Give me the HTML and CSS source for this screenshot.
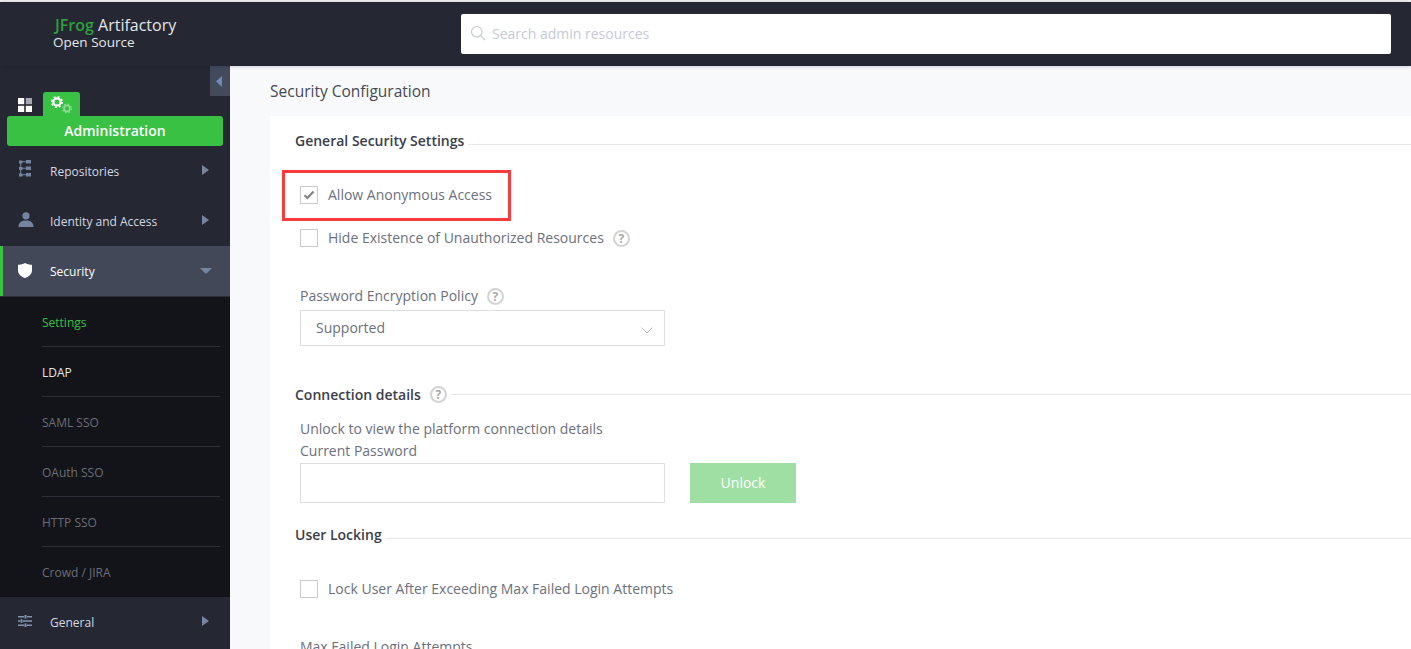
FILE: index.html
```html
<!DOCTYPE html>
<html lang="en">
<head>
    <meta charset="UTF-8">
    <title>Security Configuration</title>
    <link rel="stylesheet" href="styles.css">
</head>
<body>
    <header class="topbar">
        <div class="brand">
            <div class="brand-name"><b>JFrog</b> Artifactory</div>
            <div class="brand-sub">Open Source</div>
        </div>
        <div class="search">
            <svg width="16" height="16" viewBox="0 0 16 16" fill="none" stroke="#c5cad6" stroke-width="1.2"><circle cx="6.8" cy="6.8" r="5.3"/><path d="M10.7 10.7 L15 15"/></svg>
            <span>Search admin resources</span>
        </div>
    </header>
    <div class="layout">
        <aside class="sidebar">
            <div class="collapse"><svg width="6" height="11" viewBox="0 0 6 11"><path d="M6 0 V11 L0 5.500 Z" fill="#6f8ab5"/></svg></div>
            <div class="tabs">
                <div class="tab-grid">
                    <svg width="14" height="14" viewBox="0 0 14 14"><rect width="6.2" height="6.2" fill="#fff"/><rect x="7.8" width="6.2" height="6.2" fill="#a5a8af"/><rect y="7.8" width="6.2" height="6.2" fill="#fff"/><rect x="7.8" y="7.8" width="6.2" height="6.2" fill="#fff"/></svg>
                </div>
                <div class="tab-active">
                    <svg width="22" height="20" viewBox="0 0 22 20">
                        <circle cx="6" cy="7" r="3.600" fill="none" stroke="#fff" stroke-width="2.2"/>
                        <circle cx="6" cy="7" r="5.200" fill="none" stroke="#fff" stroke-width="1.600" stroke-dasharray="2.040 2.040"/>
                        <circle cx="16" cy="13.500" r="2.900" fill="none" stroke="#92dc97" stroke-width="1.500"/>
                        <circle cx="16" cy="13.500" r="4.300" fill="none" stroke="#92dc97" stroke-width="1.300" stroke-dasharray="1.690 1.690"/>
                    </svg>
                </div>
            </div>
            <div class="module-title">Administration</div>
            <nav>
                <div class="nav-item">
                    <svg class="nav-icon icon-repo" width="12" height="17" viewBox="0 0 12 17" fill="#75859f"><rect x="0" y="0.500" width="3.500" height="3"/><rect x="7" y="0" width="5" height="3.500"/><rect x="7" y="6.500" width="5" height="3.500"/><rect x="7" y="13" width="5" height="3.500"/><rect x="0" y="7" width="3.500" height="3"/><rect x="0" y="13.500" width="3.500" height="3"/><path d="M1.200 3h1v11h-1zM3 1.300h4v1H3zM3 7.800h4v1H3zM3 14.300h4v1H3z"/></svg>
                    <span class="nav-label">Repositories</span>
                    <span class="arrow-right"></span>
                </div>
                <div class="nav-item">
                    <svg class="nav-icon icon-user" width="16" height="15" viewBox="0 0 16 15" fill="#75859f"><circle cx="8" cy="3.800" r="3.600"/><path d="M0.500 15 C0.500 10.500 3.500 8.600 8 8.600 C12.500 8.600 15.500 10.500 15.500 15 Z"/></svg>
                    <span class="nav-label">Identity and Access</span>
                    <span class="arrow-right"></span>
                </div>
                <div class="nav-item nav-item-open">
                    <svg class="nav-icon" width="14" height="15" viewBox="0 0 14 15" fill="#fff"><path d="M7 0 C9 1.200 11.500 1.800 14 1.800 V7.500 C14 11 11 13.600 7 15 C3 13.600 0 11 0 7.500 V1.800 C2.500 1.800 5 1.200 7 0 Z"/></svg>
                    <span class="nav-label">Security</span>
                    <span class="arrow-down"></span>
                </div>
                <div class="subnav">
                    <div class="sub-item sub-current">Settings</div>
                    <div class="sub-item sub-light">LDAP</div>
                    <div class="sub-item">SAML SSO</div>
                    <div class="sub-item">OAuth SSO</div>
                    <div class="sub-item">HTTP SSO</div>
                    <div class="sub-item sub-last">Crowd / JIRA</div>
                </div>
                <div class="nav-item">
                    <svg class="nav-icon" width="14" height="12" viewBox="0 0 14 12" fill="#8494ae"><path d="M0 1h6v1.500H0zM9 1h5v1.500H9zM6.500 0h2v3.500h-2zM0 5.300h2v1.500H0zM5 5.300h9v1.500H5zM2.500 4.300h2v3.500h-2zM0 9.500h6V11H0zM9 9.500h5V11H9zM6.500 8.500h2V12h-2z"/></svg>
                    <span class="nav-label">General</span>
                    <span class="arrow-right"></span>
                </div>
            </nav>
        </aside>
        <main class="content">
            <h1>Security Configuration</h1>
            <section class="card">
                <div class="section-head"><h2>General Security Settings</h2><span class="rule"></span></div>
                <div class="field-row row-anon">
                    <span class="checkbox"><svg width="12" height="10" viewBox="0 0 12 10" fill="none" stroke="#858585" stroke-width="2.2"><path d="M1.500 5.200 L4.500 8 L10.500 1.500"/></svg></span>
                    <span class="row-text">Allow Anonymous Access</span>
                </div>
                <div class="highlight"></div>
                <div class="field-row row-hide">
                    <span class="checkbox"></span>
                    <span class="row-text">Hide Existence of Unauthorized Resources</span>
                    <span class="help">?</span>
                </div>
                <div class="label-row policy-label"><span>Password Encryption Policy</span><span class="help">?</span></div>
                <div class="select">
                    <span class="row-text">Supported</span>
                    <svg width="12" height="7" viewBox="0 0 12 7" fill="none" stroke="#b9bdc8"><path d="M0.500 0.500 L6 6 L11.500 0.500"/></svg>
                </div>
                <div class="section-head head-connection"><h2>Connection details</h2><span class="help">?</span><span class="rule"></span></div>
                <p class="hint">Unlock to view the platform connection details</p>
                <div class="label-row password-label">Current Password</div>
                <div class="unlock-row">
                    <div class="text-input"></div>
                    <div class="unlock-btn">Unlock</div>
                </div>
                <div class="section-head head-locking"><h2>User Locking</h2><span class="rule"></span></div>
                <div class="field-row row-lock">
                    <span class="checkbox"></span>
                    <span class="row-text">Lock User After Exceeding Max Failed Login Attempts</span>
                </div>
                <div class="label-row attempts-label">Max Failed Login Attempts</div>
            </section>
        </main>
    </div>
</body>
</html>
```

FILE: styles.css
```css
html, body {
    margin: 0;
    height: 649px;
    overflow: hidden;
}
body {
    font-family: "Open Sans", "Liberation Sans", sans-serif;
    font-size: 14px;
    color: #6c707c;
    background-color: #f8f9fb;
}
.topbar {
    height: 64px;
    margin-top: 2px;
    background-color: #252833;
    display: flex;
    box-shadow: 0 0 4px rgba(0, 0, 0, 0.25);
    position: relative;
    z-index: 2;
}
.brand {
    width: 461px;
    padding: 14px 0 0 53px;
    box-sizing: border-box;
    color: #e4e6ea;
}
.brand-name {
    font-size: 16px;
    line-height: 18px;
    padding-left: 2px;
}
.brand-name b {
    color: #2e9e3e;
    font-weight: 600;
}
.brand-sub {
    font-size: 13.5px;
    line-height: 17px;
}
.search {
    width: 930px;
    height: 40px;
    margin-top: 12px;
    background: #fff;
    border-radius: 2px;
    display: flex;
    align-items: center;
    gap: 6px;
    padding: 0 0 2px 9px;
    box-sizing: border-box;
    color: #c5cad6;
}
.layout {
    display: flex;
    height: 583px;
}
.sidebar {
    width: 230px;
    flex: none;
    background-color: #252833;
    position: relative;
    padding-top: 26px;
    box-sizing: border-box;
}
.collapse {
    position: absolute;
    top: 0;
    right: 0;
    width: 20px;
    height: 30px;
    padding-right: 2px;
    box-sizing: border-box;
    background-color: #424a5c;
    display: flex;
    align-items: center;
    justify-content: center;
}
.tabs {
    display: flex;
    height: 24px;
    padding-left: 18px;
}
.tab-grid {
    width: 25px;
    padding-top: 5px;
}
.tab-active {
    width: 37px;
    height: 24px;
    background-color: #38c142;
    border-radius: 3px 3px 0 0;
    padding: 3px 0 0 8px;
    box-sizing: border-box;
}
.module-title {
    margin: 0 7px;
    height: 30px;
    line-height: 30px;
    background-color: #38c142;
    border-radius: 3px;
    color: #fff;
    font-weight: 600;
    text-align: center;
    font-size: 14px;
}
.nav-item {
    height: 50px;
    display: flex;
    align-items: center;
    color: #d3d8e2;
    font-size: 12px;
    position: relative;
    padding-left: 18px;
    box-sizing: border-box;
}
.nav-icon {
    flex: none;
    margin-top: -2px;
}
.icon-repo {
    margin: -5px 0 0 1px;
}
.icon-user {
    margin-top: -3px;
}
.nav-label {
    position: absolute;
    left: 50px;
}
.nav-item-open {
    background-color: #424858;
    color: #fff;
    border-left: 3px solid #38c142;
    padding-left: 15px;
}
.nav-item-open .nav-label {
    left: 47px;
}
.arrow-right {
    position: absolute;
    left: 202px;
    top: 19px;
    border-left: 7px solid #75859f;
    border-top: 5px solid transparent;
    border-bottom: 5px solid transparent;
}
.arrow-down {
    position: absolute;
    left: 197px;
    top: 22px;
    border-top: 6px solid #75859f;
    border-left: 6.500px solid transparent;
    border-right: 6.500px solid transparent;
}
.subnav {
    background-color: #12141a;
    border-top: 1px solid #2c2f38;
    padding: 0 10px 0 42px;
    height: 301px;
    box-sizing: border-box;
}
.sub-item {
    height: 50px;
    line-height: 52px;
    box-sizing: border-box;
    font-size: 12px;
    color: #6b6e76;
    border-bottom: 1px solid #2c2f38;
}
.sub-last {
    border-bottom: none;
}
.sub-current {
    color: #38c142;
}
.sub-light {
    color: #e4e6ea;
}
.content {
    flex: 1;
    padding: 0 0 0 40px;
}
h1 {
    font-size: 15.5px;
    font-weight: 400;
    color: #454954;
    margin: 0;
    height: 50px;
    line-height: 50px;
}
.card {
    background: #fff;
    height: 533px;
    padding: 0 0 0 25px;
    position: relative;
}
.section-head {
    display: flex;
    align-items: center;
    height: 20px;
    padding-top: 14px;
    gap: 4px;
}
h2 {
    font-size: 14px;
    font-weight: 600;
    color: #3a3e49;
    margin: 0;
}
.rule {
    flex: 1;
    height: 1px;
    background-color: #e6e7ec;
    margin-top: 8px;
}
.field-row {
    display: flex;
    align-items: center;
    gap: 10px;
    padding-left: 5px;
    height: 20px;
}
.row-text {
    padding-bottom: 2px;
}
.row-anon {
    margin-top: 35px;
}
.row-hide {
    margin-top: 23px;
}
.row-lock {
    margin-top: 35px;
}
.checkbox {
    width: 18px;
    height: 18px;
    border: 1px solid #c9cacf;
    box-sizing: border-box;
    display: flex;
    align-items: center;
    justify-content: center;
}
.highlight {
    position: absolute;
    left: 12px;
    top: 54px;
    width: 229px;
    height: 51px;
    border: 3px solid #fb3b3b;
    box-sizing: border-box;
}
.help {
    width: 17px;
    height: 17px;
    line-height: 13px;
    border: 2px solid #d2d2d2;
    box-sizing: border-box;
    border-radius: 50%;
    text-align: center;
    font-size: 12px;
    font-weight: 700;
    color: #a9a9a9;
    flex: none;
}
.field-row .help {
    margin-left: -1px;
}
.label-row {
    display: flex;
    align-items: center;
    gap: 9px;
    padding-left: 5px;
    height: 20px;
    line-height: 20px;
}
.policy-label {
    margin-top: 38px;
}
.select {
    width: 365px;
    height: 36px;
    margin: 4px 0 0 5px;
    border: 1px solid #dcdde5;
    box-sizing: border-box;
    display: flex;
    align-items: center;
    justify-content: space-between;
    padding: 0 11px 0 15px;
}
.select svg {
    margin-top: 4px;
}
.head-connection {
    margin-top: 24px;
}
.head-connection .help {
    margin-left: 5px;
}
.head-connection .rule {
    margin-top: 0;
}
.hint {
    margin: 15px 0 0 5px;
    height: 20px;
    line-height: 20px;
}
.password-label {
    margin-top: 2px;
}
.unlock-row {
    display: flex;
    gap: 25px;
    margin: 2px 0 0 5px;
}
.text-input {
    width: 365px;
    height: 40px;
    border: 1px solid #dcdde5;
    box-sizing: border-box;
}
.unlock-btn {
    width: 106px;
    height: 40px;
    line-height: 40px;
    background-color: #a0dfa4;
    color: #fff;
    text-align: center;
}
.head-locking {
    margin-top: 7px;
}
.attempts-label {
    margin-top: 38px;
}
```
